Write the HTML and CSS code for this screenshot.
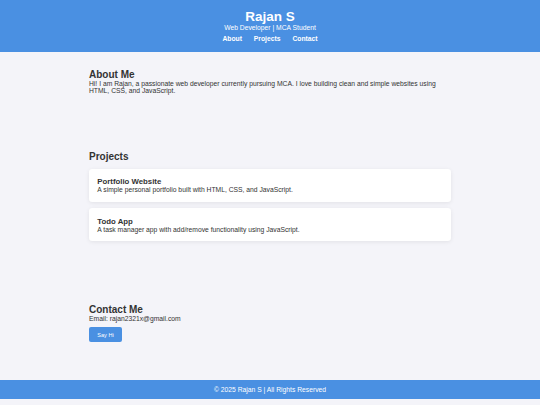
FILE: index.html
```html
<!DOCTYPE html>
<html lang="en">
<head>
    <meta charset="UTF-8">
    <meta name="viewport" content="width=device-width, initial-scale=1.0">
    <title>Rajan S | Portfolio</title>
    <link rel="stylesheet" href="styles.css">
</head>
<body>
    <header class="site-header">
        <h1>Rajan S</h1>
        <p class="tagline">Web Developer | MCA Student</p>
        <nav class="nav">
            <a href="#about">About</a>
            <a href="#projects">Projects</a>
            <a href="#contact">Contact</a>
        </nav>
    </header>

    <main class="content">
        <section id="about" class="section">
            <h2>About Me</h2>
            <p>Hi! I am Rajan, a passionate web developer currently pursuing MCA. I love building clean and simple websites using HTML, CSS, and JavaScript.</p>
        </section>

        <section id="projects" class="section projects">
            <h2>Projects</h2>
            <div class="project-list">
                <div class="project">
                    <h3>Portfolio Website</h3>
                    <p>A simple personal portfolio built with HTML, CSS, and JavaScript.</p>
                </div>
                <div class="project">
                    <h3>Todo App</h3>
                    <p>A task manager app with add/remove functionality using JavaScript.</p>
                </div>
            </div>
        </section>

        <section id="contact" class="section contact">
            <h2>Contact Me</h2>
            <p>Email: rajan2321x@gmail.com</p>
            <button class="say-hi">Say Hi</button>
        </section>
    </main>

    <footer class="site-footer">
        <p>&copy; 2025 Rajan S | All Rights Reserved</p>
    </footer>
</body>
</html>
```

FILE: styles.css
```css
body {
    margin: 0;
    font-family: "Liberation Sans", Arial, sans-serif;
    font-size: 6.75px;
    background-color: #f4f4f9;
    color: #333;
}

h1, h2, h3, p {
    margin: 0;
}

.site-header {
    background-color: #4a90e2;
    color: #fff;
    text-align: center;
    padding: 8.5px 0 10px;
}

.site-header h1 {
    font-size: 13.5px;
}

.nav {
    margin-top: 4px;
}

.nav a {
    color: #fff;
    text-decoration: none;
    font-weight: bold;
    margin: 0 5px;
}

.content {
    width: 362px;
    margin: 0 auto;
    padding-top: 17.5px;
}

.section {
    margin-bottom: 57px;
}

.section.projects {
    margin-bottom: 63px;
}

.section.contact {
    margin-bottom: 0;
}

.section h2 {
    font-size: 10px;
}

.project-list {
    margin-top: 7px;
}

.project {
    background-color: #fff;
    border-radius: 3.3px;
    padding: 8.33px;
    margin-bottom: 6.7px;
    box-shadow: 0 1px 4px rgba(0, 0, 0, 0.08);
}

.project h3 {
    font-size: 7.8px;
}

.say-hi {
    margin-top: 5px;
    background-color: #4a90e2;
    color: #fff;
    border: none;
    border-radius: 2px;
    padding: 4.5px 8.33px;
    font-family: "Liberation Sans", Arial, sans-serif;
    font-size: 5.55px;
    cursor: pointer;
}

.site-footer {
    background-color: #4a90e2;
    color: #fff;
    text-align: center;
    padding: 6.2px 0;
    margin-top: 38px;
}
```
